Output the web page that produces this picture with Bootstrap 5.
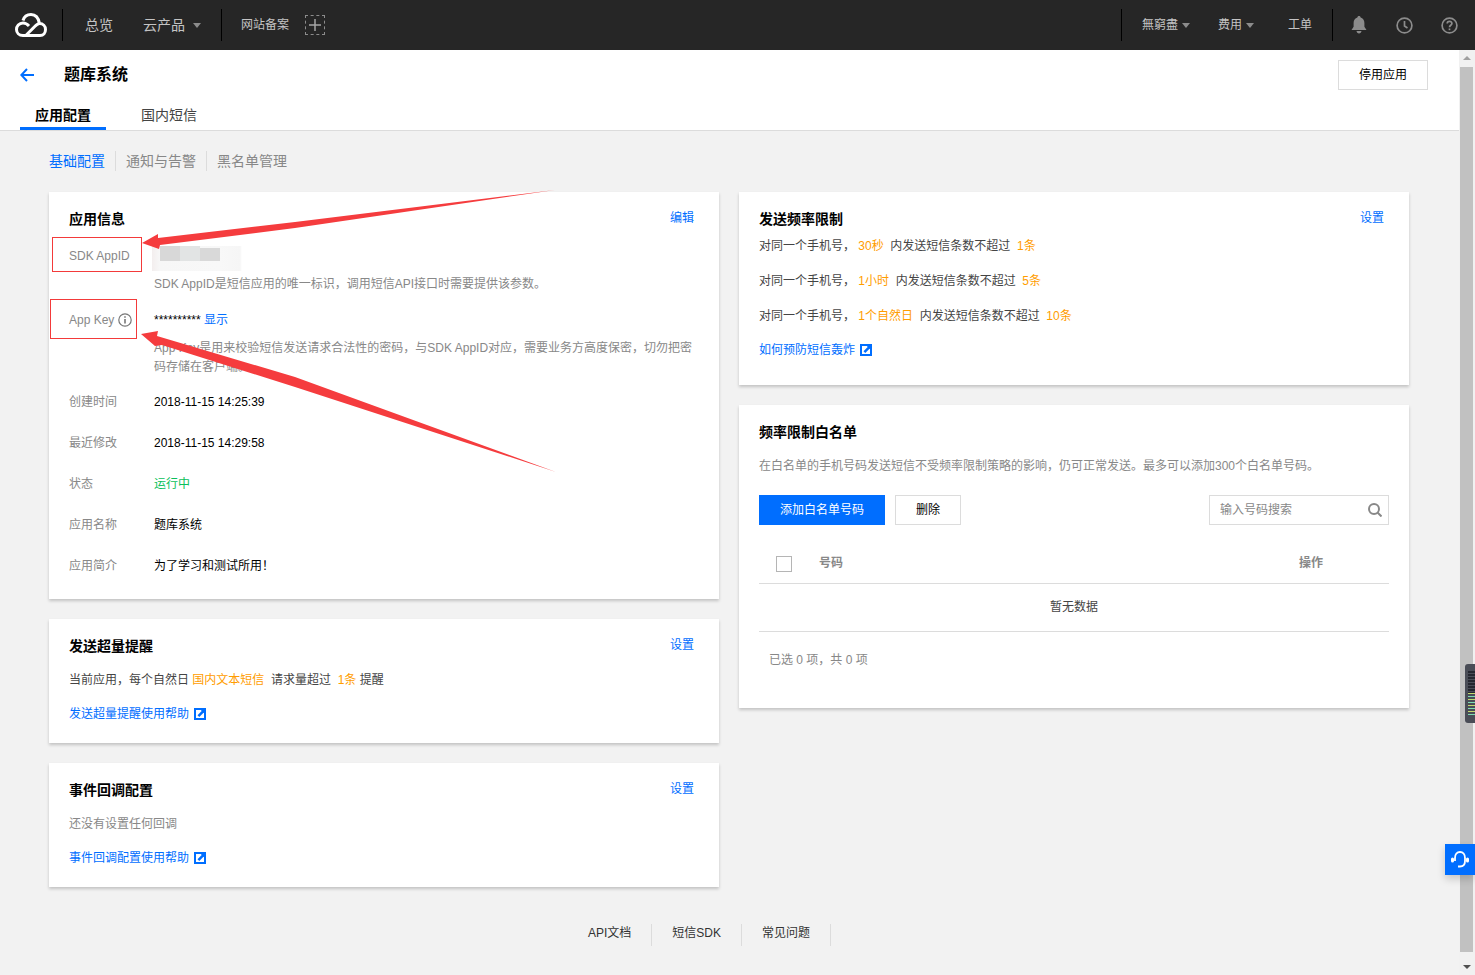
<!DOCTYPE html>
<html lang="zh-CN">
<head>
    <meta charset="UTF-8">
    <title>题库系统</title>
    <link href="https://cdn.jsdelivr.net/npm/bootstrap@5.3.0/dist/css/bootstrap.min.css" rel="stylesheet">
    <style>
        html, body { height: 975px; overflow: hidden; }
        body {
            font-family: "Liberation Sans", "Noto Sans CJK SC", sans-serif;
            font-size: 12px;
            line-height: 18px;
            color: #000;
            background: #f2f2f2;
            position: relative;
        }
        a { color: #006eff; text-decoration: none; }
        .topbar { height: 50px; background: #262626; color: #c4c4c4; }
        .top-logo { width: 62px; padding-left: 15px; }
        .top-sep { width: 1px; height: 32px; background: #000; }
        .top-caret { width: 0; height: 0; border: 4px solid transparent; border-top: 5px solid #8c8c8c; border-bottom: 0; margin-left: 4px; }
        .top-large { font-size: 14px; }
        .top-plus { width: 20px; height: 20px; border: 1px dashed #8c8c8c; color: #a5a5a5; margin-left: 16px; }
        .top-first { width: 158px; padding-left: 22px; }
        .top-first .top-caret { margin-left: 8px; margin-right: 20px; }
        .top-record { padding-left: 19px; }
        .top-right-a { margin-left: auto; }
        .top-acc { padding: 0 20px; }
        .top-job { margin-left: 34px; }
        .top-tools { padding-left: 14px; margin-right: 17px; }
        .top-icon { width: 45px; }
        .page-main { width: 1459px; height: 925px; }
        .page-head { height: 81px; background: #fff; border-bottom: 1px solid #dcdcdc; position: relative; }
        .head-row { height: 50px; padding: 10px 31px 0 20px; }
        .head-title { font-size: 16px; font-weight: 700; margin-left: 30px; }
        .btn-plain {
            width: 90px; height: 30px; padding: 0; font-size: 12px; line-height: 29px;
            border: 1px solid #dcdcdc; border-radius: 0; background: #fff; color: #000;
        }
        .head-tabs { padding-left: 20px; height: 30px; }
        .head-tab { font-size: 14px; line-height: 18px; padding: 6px 15px 0; height: 30px; color: #444; margin-right: 20px; }
        .head-tab.is-on { color: #000; font-weight: 700; border-bottom: 3px solid #006eff; }
        .sub-nav { padding: 21px 0 0 49px; height: 61px; font-size: 14px; color: #888; }
        .sub-nav span { padding: 2px 10px; border-left: 1px solid #dcdcdc; }
        .sub-nav a { padding-right: 10px; }
        .board { display: grid; grid-template-columns: 670px 670px; column-gap: 20px; padding-left: 49px; align-items: start; height: 732px; }
        .panel {
            background: #fff; border: 0; border-radius: 0; margin-bottom: 20px;
            padding: 18px 25px 0 20px;
            box-shadow: 0 2px 3px rgba(0, 0, 0, .2);
        }
        .panel-title { font-size: 14px; font-weight: 700; line-height: 18px; }
        .panel-link { line-height: 16px; }
        .info-top { margin-bottom: 19px; }
        .info-row { display: flex; margin-bottom: 23px; }
        .info-row.has-hint { margin-bottom: 17px; }
        .info-row.hint-tight { margin-bottom: 16px; }
        .info-label { width: 85px; flex: none; color: #888; }
        .info-label-key { height: 18px; }
        .info-hint { color: #888; margin-top: 10px; line-height: 19px; }
        .mask-blur {
            width: 90px; height: 26px; margin: -1px 0 -7px -2px;
            background:
                linear-gradient(#d8d8d8, #d8d8d8) 8px 0 / 20px 15px no-repeat,
                linear-gradient(#e2e4e4, #e2e4e4) 28px 0 / 20px 15px no-repeat,
                linear-gradient(#d9d9d9, #d9d9d9) 48px 2px / 20px 13px no-repeat,
                linear-gradient(90deg, #f3eeee, #f7f7f7 8px, #f8f8f8 68px, #f6f6f6 88px, #fff) 0 0 / 100% 25px no-repeat;
        }
        .txt-orange { color: #ff9d00; }
        .txt-green { color: #0abf5b; }
        .txt-dark { color: #444; }
        .txt-gray { color: #888; }
        .gap-line { margin-top: 17px; }
        .help-link { margin-top: 16px; line-height: 18px; }
        .help-link svg { vertical-align: -2px; margin-left: 2px; }
        .rate-first { margin-top: 9px; }
        .btn-blue { width: 126px; height: 30px; padding: 0; font-size: 12px; line-height: 31px; border: 0; border-radius: 0; background: #006eff; color: #fff; }
        .btn-del { width: 66px; margin-left: 10px; }
        .search-box { width: 180px; height: 30px; border: 1px solid #dcdcdc; margin-left: auto; padding: 0 6px 0 10px; color: #888; line-height: 28px; }
        .white-table { width: 630px; margin: 0; }
        .white-table th, .white-table td { border-bottom: 1px solid #dcdcdc; font-size: 12px; padding: 0; }
        .white-table th { color: #888; height: 58px; font-weight: 700; vertical-align: bottom; padding-bottom: 11px; }
        .white-table td { height: 48px; text-align: center; color: #444; vertical-align: middle; }
        .fake-check { display: block; width: 16px; height: 16px; border: 1px solid #b5b5b5; margin-left: 17px; }
        .table-foot { margin-top: 19px; padding-left: 10px; }
        .foot-links { height: 22px; padding-left: 568px; color: #333; }
        .foot-links span { padding: 0 20px; border-right: 1px solid #dcdcdc; }
        .scroll-track { width: 16px; height: 925px; background: #f1f1f1; position: relative; padding: 17px 2px 23px 1px; }
        .scroll-thumb { height: 100%; background: #c1c1c1; }
        .scroll-up, .scroll-down { position: absolute; left: 4px; width: 0; height: 0; border: 4px solid transparent; }
        .scroll-up { top: 6px; border-bottom: 4px solid #a0a0a0; border-top: 0; }
        .scroll-down { bottom: 6px; border-top: 4px solid #505050; border-bottom: 0; }
        .meter-tab {
            position: absolute; left: 1465px; top: 664px; width: 10px; height: 59px;
            background: #4a4d57; border-radius: 3px 0 0 3px; padding: 7px 0 0 3px;
        }
        .meter-bars { width: 7px; height: 46px; background: repeating-linear-gradient(180deg, #252730 0 1.5px, transparent 1.5px 3px); }
        .meter-lit { position: absolute; left: 3px; top: 29px; width: 7px; height: 24px; background: repeating-linear-gradient(180deg, #c5d96e 0 1.5px, #4a4d57 1.5px 3px, #7edcb4 3px 4.5px, #4a4d57 4.5px 6px); }
        .help-float {
            position: absolute; left: 1445px; top: 844px; width: 30px; height: 31px;
            background: #006eff; box-shadow: 0 4px 8px rgba(0, 0, 0, .18);
        }
        .mark-box { position: absolute; border: 1px solid #f33a3a; }
        .mark-sdk { left: 52px; top: 237px; width: 90px; height: 35px; }
        .mark-key { left: 50px; top: 299px; width: 87px; height: 40px; }
        .mark-arrows { position: absolute; left: 0; top: 0; pointer-events: none; }
    </style>
</head>
<body>
    <div class="topbar d-flex align-items-center">
        <div class="top-logo d-flex">
            <svg width="32" height="24" viewBox="0 0 32 24" fill="none" stroke="#fff" stroke-width="3">
                <path d="M8 22.500h17c3.500 0 5.500-2.800 5.500-6 0-3.400-2.500-6-6-6C23.500 5 20.500 1.500 16 1.500c-4 0-7 2.500-8 6"/>
                <path d="M8 22.500c-4 0-6.500-2.800-6.500-6s2.500-6.500 6.500-6.500c2.500 0 4.500 1.300 6 3"/>
                <path d="M11 22.300l8.500-8.500c1.500-1.600 3-3.300 5-3.300"/>
            </svg>
        </div>
        <div class="top-sep"></div>
        <div class="top-first d-flex align-items-center top-large">
            <span>总览</span>
            <span class="ms-auto">云产品</span>
            <i class="top-caret"></i>
        </div>
        <div class="top-sep"></div>
        <div class="d-flex align-items-center top-record">
            <span>网站备案</span>
            <span class="top-plus d-flex align-items-center justify-content-center">
                <svg width="12" height="12" viewBox="0 0 12 12" stroke="#a5a5a5" stroke-width="1.500"><path d="M6 0v12M0 6h12"/></svg>
            </span>
        </div>
        <div class="top-sep top-right-a"></div>
        <div class="d-flex align-items-center top-acc">
            <span>無窮盡</span><i class="top-caret"></i>
            <span class="ms-4 ps-1">费用</span><i class="top-caret"></i>
            <span class="top-job">工单</span>
        </div>
        <div class="top-sep"></div>
        <div class="d-flex align-items-center top-tools">
            <span class="top-icon d-flex">
                <svg class="ms-1" width="16" height="18" viewBox="0 0 16 18" fill="#8c8c8c"><path d="M8 0c1 0 1.600.7 1.600 1.600C12 2.300 13.400 4.500 13.400 7v3.800L15.500 14H.5l2.100-3.200V7c0-2.500 1.400-4.700 3.800-5.400C6.400.7 7 0 8 0zM5.500 15h5C10.300 16.500 9.300 17.500 8 17.500S5.700 16.500 5.500 15z"/></svg>
            </span>
            <span class="top-icon d-flex">
                <svg class="ms-1" width="17" height="17" viewBox="0 0 17 17" fill="none" stroke="#8c8c8c" stroke-width="1.700"><circle cx="8.500" cy="8.500" r="7.400"/><path d="M8.500 4v5l3 2"/></svg>
            </span>
            <span class="d-flex">
                <svg class="ms-1" width="17" height="17" viewBox="0 0 17 17" fill="none" stroke="#8c8c8c" stroke-width="1.700"><circle cx="8.500" cy="8.500" r="7.400"/><path d="M6.200 6.600c0-3 4.700-3 4.700-.1 0 1.800-2.400 1.800-2.400 3.700"/><path d="M8.500 11.500v1.700"/></svg>
            </span>
        </div>
    </div>

    <div class="d-flex">
        <div class="page-main">
            <div class="page-head">
                <div class="head-row d-flex align-items-start justify-content-between">
                    <div class="d-flex align-items-center" style="height:30px;">
                        <svg width="14" height="14" viewBox="0 0 14 14" fill="none" stroke="#006eff" stroke-width="2"><path d="M7 1L1.300 7 7 13M1.500 7H14"/></svg>
                        <span class="head-title">题库系统</span>
                    </div>
                    <button class="btn btn-plain">停用应用</button>
                </div>
                <div class="head-tabs d-flex">
                    <div class="head-tab is-on">应用配置</div>
                    <div class="head-tab">国内短信</div>
                </div>
            </div>
            <div class="sub-nav"><a href="#">基础配置</a><span>通知与告警</span><span>黑名单管理</span></div>
            <div class="board">
                <div>
                    <div class="card panel" style="height:407px;">
                        <div class="d-flex justify-content-between align-items-start info-top">
                            <div class="panel-title">应用信息</div><a class="panel-link" href="#">编辑</a>
                        </div>
                        <div class="info-row has-hint">
                            <div class="info-label">SDK AppID</div>
                            <div>
                                <div class="mask-blur"></div>
                                <div class="info-hint">SDK AppID是短信应用的唯一标识，调用短信API接口时需要提供该参数。</div>
                            </div>
                        </div>
                        <div class="info-row hint-tight">
                            <div class="info-label info-label-key d-flex align-items-center">App Key
                                <svg class="ms-1" width="14" height="14" viewBox="0 0 14 14" fill="none" stroke="#777" stroke-width="1.200"><circle cx="7" cy="7" r="6.200"/><path d="M7 6v4.500" stroke-width="1.600"/><path d="M7 3.200v1.600" stroke-width="1.600"/></svg>
                            </div>
                            <div>
                                <div>********** <a href="#">显示</a></div>
                                <div class="info-hint">App Key是用来校验短信发送请求合法性的密码，与SDK AppID对应，需要业务方高度保密，切勿把密码存储在客户端。</div>
                            </div>
                        </div>
                        <div class="info-row"><div class="info-label">创建时间</div><div>2018-11-15 14:25:39</div></div>
                        <div class="info-row"><div class="info-label">最近修改</div><div>2018-11-15 14:29:58</div></div>
                        <div class="info-row"><div class="info-label">状态</div><div class="txt-green">运行中</div></div>
                        <div class="info-row"><div class="info-label">应用名称</div><div>题库系统</div></div>
                        <div class="info-row"><div class="info-label">应用简介</div><div>为了学习和测试所用！</div></div>
                    </div>
                    <div class="card panel" style="height:124px;">
                        <div class="d-flex justify-content-between align-items-start">
                            <div class="panel-title">发送超量提醒</div><a class="panel-link" href="#">设置</a>
                        </div>
                        <div class="txt-dark mt-3">当前应用，每个自然日 <span class="txt-orange">国内文本短信&nbsp;</span> 请求量超过 <span class="txt-orange">&nbsp;1条</span> 提醒</div>
                        <div class="help-link"><a href="#">发送超量提醒使用帮助 <svg width="12" height="12" viewBox="0 0 12 12"><rect width="12" height="12" fill="#006eff"/><rect x="2" y="2" width="8" height="8" fill="#fff"/><path fill="#006eff" d="M6 1h5.500v5.500L9.500 4.800 5.300 9 3.500 7.200 7.700 3z"/></svg></a></div>
                    </div>
                    <div class="card panel" style="height:124px;">
                        <div class="d-flex justify-content-between align-items-start">
                            <div class="panel-title">事件回调配置</div><a class="panel-link" href="#">设置</a>
                        </div>
                        <div class="txt-gray mt-3">还没有设置任何回调</div>
                        <div class="help-link"><a href="#">事件回调配置使用帮助 <svg width="12" height="12" viewBox="0 0 12 12"><rect width="12" height="12" fill="#006eff"/><rect x="2" y="2" width="8" height="8" fill="#fff"/><path fill="#006eff" d="M6 1h5.500v5.500L9.500 4.800 5.300 9 3.500 7.200 7.700 3z"/></svg></a></div>
                    </div>
                </div>
                <div>
                    <div class="card panel" style="height:193px;">
                        <div class="d-flex justify-content-between align-items-start">
                            <div class="panel-title">发送频率限制</div><a class="panel-link" href="#">设置</a>
                        </div>
                        <div class="txt-dark rate-first">对同一个手机号， <span class="txt-orange">30秒&nbsp;</span> 内发送短信条数不超过 <span class="txt-orange">&nbsp;1条</span></div>
                        <div class="txt-dark gap-line">对同一个手机号， <span class="txt-orange">1小时&nbsp;</span> 内发送短信条数不超过 <span class="txt-orange">&nbsp;5条</span></div>
                        <div class="txt-dark gap-line">对同一个手机号， <span class="txt-orange">1个自然日&nbsp;</span> 内发送短信条数不超过 <span class="txt-orange">&nbsp;10条</span></div>
                        <div class="help-link"><a href="#">如何预防短信轰炸 <svg width="12" height="12" viewBox="0 0 12 12"><rect width="12" height="12" fill="#006eff"/><rect x="2" y="2" width="8" height="8" fill="#fff"/><path fill="#006eff" d="M6 1h5.500v5.500L9.500 4.800 5.300 9 3.500 7.200 7.700 3z"/></svg></a></div>
                    </div>
                    <div class="card panel" style="height:303px;">
                        <div class="panel-title">频率限制白名单</div>
                        <div class="txt-gray mt-3">在白名单的手机号码发送短信不受频率限制策略的影响，仍可正常发送。最多可以添加300个白名单号码。</div>
                        <div class="d-flex mt-3 pt-1" style="width:630px;">
                            <button class="btn btn-blue">添加白名单号码</button>
                            <button class="btn btn-plain btn-del">删除</button>
                            <div class="search-box d-flex align-items-center justify-content-between">
                                <span>输入号码搜索</span>
                                <svg width="14" height="14" viewBox="0 0 14 14" fill="none" stroke="#888" stroke-width="2"><circle cx="6" cy="6" r="5"/><path d="M9.500 9.500L13.500 13.500"/></svg>
                            </div>
                        </div>
                        <table class="table white-table">
                            <thead>
                                <tr>
                                    <th style="width:60px;"><i class="fake-check"></i></th>
                                    <th>号码</th>
                                    <th style="width:90px;">操作</th>
                                </tr>
                            </thead>
                            <tbody><tr><td colspan="3">暂无数据</td></tr></tbody>
                        </table>
                        <div class="txt-gray table-foot">已选 0 项，共 0 项</div>
                    </div>
                </div>
            </div>
            <div class="foot-links d-flex"><span>API文档</span><span>短信SDK</span><span>常见问题</span></div>
        </div>
        <div class="scroll-track">
            <i class="scroll-up"></i>
            <div class="scroll-thumb"></div>
            <i class="scroll-down"></i>
        </div>
    </div>

    <div class="meter-tab"><div class="meter-bars"></div><i class="meter-lit"></i></div>
    <div class="help-float d-flex align-items-center justify-content-center">
        <svg width="20" height="18" viewBox="0 0 20 18" fill="none" stroke="#fff" stroke-width="1.800">
            <path d="M5 10V7C5 3.500 7 1 10 1s5 2.500 5 6v3c0 3-1.500 5.500-5 5.500H8"/>
            <rect x="1" y="6.500" width="3" height="5" rx="1.500" fill="#fff" stroke="none"/>
            <rect x="16" y="6.500" width="3" height="5" rx="1.500" fill="#fff" stroke="none"/>
        </svg>
    </div>

    <div class="mark-box mark-sdk"></div>
    <div class="mark-box mark-key"></div>
    <svg class="mark-arrows" width="1475" height="975">
        <polygon fill="#f53c3e" points="142,243 158,234 158,238 295,222 555,190 295,228 160,245 159,249"/>
        <polygon fill="#f53c3e" points="141,334 158,331 157,336 295,377 556,472 295,387 162,345 155,346"/>
    </svg>
</body>
</html>
